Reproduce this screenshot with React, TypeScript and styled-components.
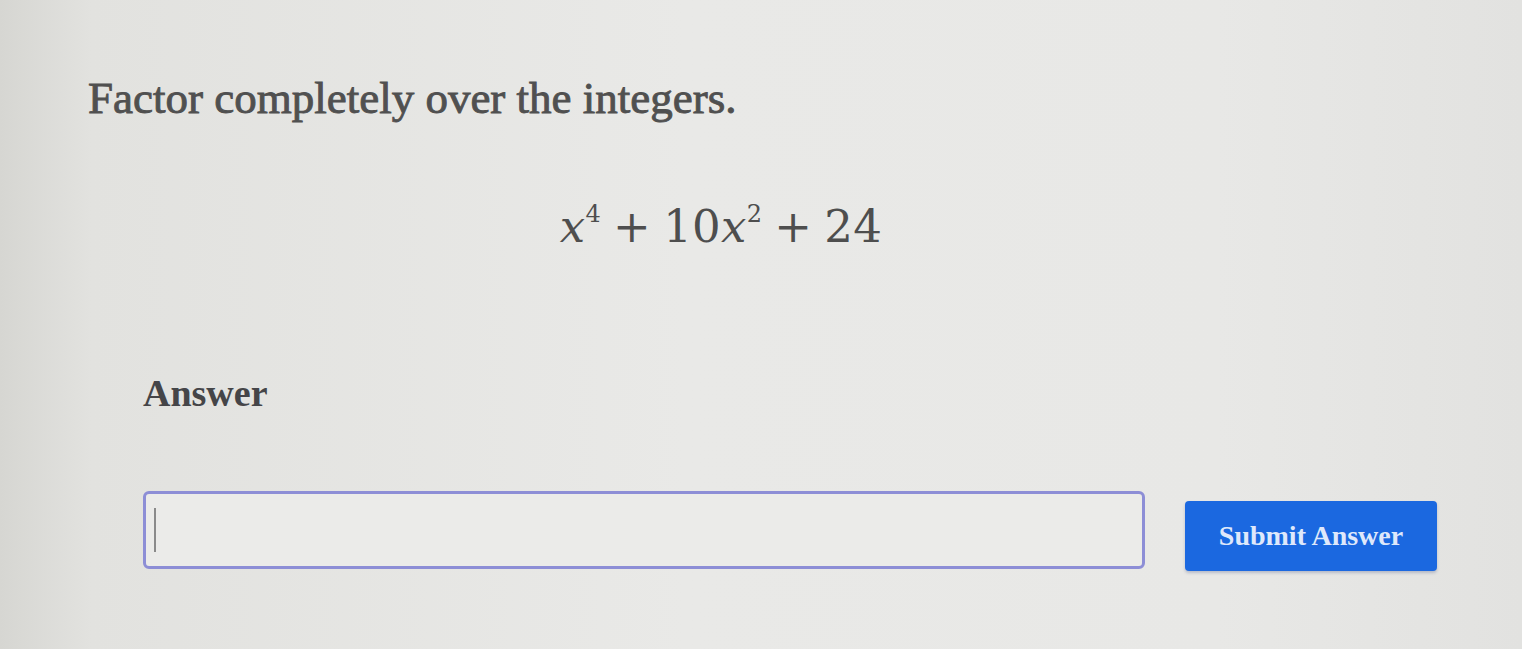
import React from 'react';
import styled, { createGlobalStyle } from 'styled-components';

const GlobalStyle = createGlobalStyle`
  html, body {
    margin: 0;
    padding: 0;
  }
  body {
    font-family: 'Liberation Serif', 'Times New Roman', serif;
  }
`;

const Page = styled.div`
  background: linear-gradient(90deg, #d6d6d2 0%, #e2e2df 6%, #e9e9e7 45%, #e8e8e6 80%, #e2e2e0 100%);
  box-sizing: border-box;
  height: 649px;
  overflow: hidden;
  padding: 72px 0 0 88px;
  width: 1522px;
`;

const Content = styled.div`
  display: flex;
  flex-direction: column;
  width: 1350px;
`;

const Prompt = styled.h1`
  color: #505050;
  font-size: 45px;
  font-weight: 400;
  letter-spacing: 0;
  line-height: 52px;
  margin: 0;
  -webkit-text-stroke: 0.9px #505050;
`;

const EquationRow = styled.div`
  display: flex;
  justify-content: center;
  margin-top: 74px;
  padding-right: 84px;
`;

const Equation = styled.div`
  color: #4e4e4e;
  font-family: 'DejaVu Serif', 'Liberation Serif', serif;
  font-size: 45px;
  line-height: 58px;
  letter-spacing: 0.3px;
`;

const Var = styled.i`
  font-style: italic;
`;

const Sup = styled.sup`
  font-size: 24px;
  line-height: 0;
  position: relative;
  top: -4px;
`;

const Op = styled.span`
  margin: 0 12px;
`;

const AnswerBlock = styled.div`
  display: flex;
  flex-direction: column;
  margin-top: 116px;
  padding-left: 55px;
`;

const Label = styled.div`
  color: #454548;
  font-size: 38px;
  font-weight: 700;
  line-height: 42px;
`;

const Row = styled.div`
  align-items: flex-end;
  display: flex;
  gap: 40px;
  margin-top: 77px;
`;

const Field = styled.div`
  align-items: center;
  background: #ebebe9;
  border: 3px solid #8d8ed6;
  border-radius: 6px;
  box-sizing: border-box;
  display: flex;
  height: 78px;
  padding-left: 8px;
  width: 1002px;
`;

const Caret = styled.span`
  background: #8a8a8a;
  display: block;
  height: 44px;
  width: 2px;
`;

const SubmitButton = styled.button`
  background: #1b68e0;
  border: none;
  border-radius: 4px;
  box-shadow: 0 2px 3px rgba(40, 60, 120, 0.25);
  color: #dfe8fb;
  cursor: pointer;
  font-family: 'Liberation Serif', 'Times New Roman', serif;
  font-size: 28px;
  font-weight: 700;
  height: 70px;
  margin-bottom: -2px;
  padding: 0;
  width: 252px;
`;

export default function App() {
  return (
    <>
      <GlobalStyle />
      <Page>
        <Content>
          <Prompt>Factor completely over the integers.</Prompt>
          <EquationRow>
            <Equation>
              <Var>x</Var>
              <Sup>4</Sup>
              <Op>+</Op>
              10<Var>x</Var>
              <Sup>2</Sup>
              <Op>+</Op>
              24
            </Equation>
          </EquationRow>
          <AnswerBlock>
            <Label>Answer</Label>
            <Row>
              <Field>
                <Caret />
              </Field>
              <SubmitButton>Submit Answer</SubmitButton>
            </Row>
          </AnswerBlock>
        </Content>
      </Page>
    </>
  );
}
